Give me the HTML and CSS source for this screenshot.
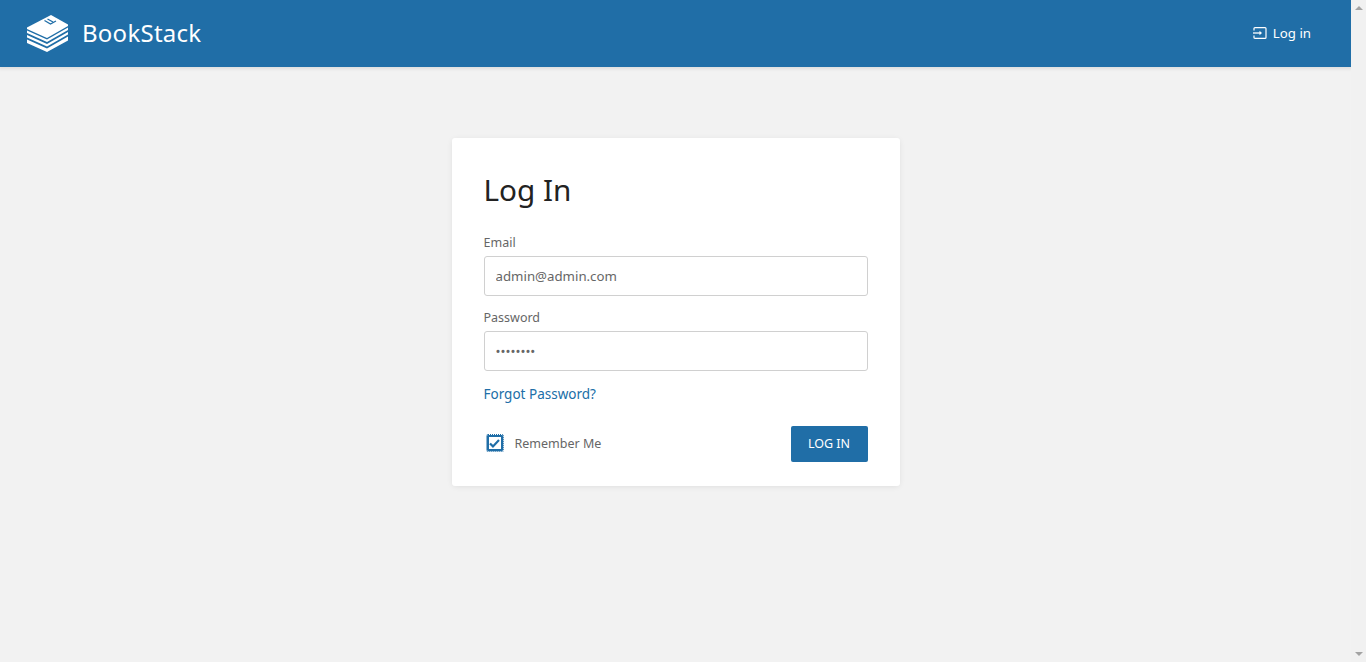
FILE: index.html
```html
<!DOCTYPE html>
<html>
<head>
	<meta charset="UTF-8">
	<title>Log In | BookStack</title>
	<link rel="stylesheet" href="styles.css">
</head>
<body>
	<div class="page">
		<header class="topbar">
			<a class="brand">
				<svg class="brand-logo" viewBox="0 0 42 37">
					<path fill="#fff" d="M25 0 42 9.500 42 11 21 23 1 14 1 12.500z"/>
					<path fill="none" stroke="#206ea7" stroke-width="1.300" d="M18.500 5.500 24.500 9 30 6M21.500 4 27 7"/>
					<path fill="#fff" d="M1 15.500 21 24.500 42 12.500v2.500L21 27 1 18zM1 20 21 29 42 17v2.500L21 31.500 1 22.500zM1 24.500 21 33.500 42 21.500v4L21 37 1 28z"/>
				</svg>
				<span class="brand-name">BookStack</span>
			</a>
			<a class="login-link">
				<svg class="login-icon" viewBox="0 0 14 12">
					<path fill="none" stroke="#fff" stroke-width="1.200" d="M1 3.500V1.600Q1 .6 2 .6h10q1 0 1 1v8.800q0 1-1 1H2q-1 0-1-1V8.500"/>
					<path fill="none" stroke="#fff" stroke-width="1.300" d="M0 6h7"/>
					<path fill="#fff" d="M6.500 3.800 9 6 6.500 8.200z"/>
				</svg>
				<span>Log in</span>
			</a>
		</header>

		<main class="content">
			<div class="card">
				<h1 class="card-title">Log In</h1>
				<form>
					<label class="field-label" for="email">Email</label>
					<input class="field-input" id="email" type="text" value="admin@admin.com">

					<label class="field-label second" for="password">Password</label>
					<input class="field-input" id="password" type="password" value="password">

					<a class="forgot-link">Forgot Password?</a>

					<div class="form-foot">
						<label class="remember">
							<span class="check-box">
								<svg viewBox="0 0 12 10"><path fill="none" stroke="#206ea7" stroke-width="2.400" d="M1 5 4.300 8.200 11 1.200"/></svg>
							</span>
							<span>Remember Me</span>
						</label>
						<button class="button" type="button">LOG IN</button>
					</div>
				</form>
			</div>
		</main>
	</div>

	<div class="scrollbar">
		<span class="arrow-up"></span>
		<span class="arrow-down"></span>
	</div>
</body>
</html>
```
FILE: styles.css
```css
* {
	box-sizing: border-box;
}

html, body {
	height: 100%;
	margin: 0;
	overflow: hidden;
}

body {
	display: flex;
	background-color: #f2f2f2;
	font-family: "Noto Sans", "Open Sans", sans-serif;
	color: #444;
}

.page {
	flex-grow: 1;
	min-width: 0;
}

.topbar {
	display: flex;
	align-items: center;
	justify-content: space-between;
	height: 67px;
	padding: 0 40px 0 26px;
	background-color: #206ea7;
	box-shadow: 0 1px 3px 1px rgba(76, 76, 76, 0.12);
	color: #fff;
}

.brand {
	display: flex;
	align-items: center;
}

.brand-logo {
	width: 42px;
	height: 37px;
}

.brand-name {
	margin-left: 14px;
	padding-bottom: 3px;
	font-size: 24px;
	letter-spacing: 0.25px;
}

.login-link {
	display: flex;
	align-items: center;
	padding-bottom: 1px;
	font-size: 13.250px;
}

.login-icon {
	width: 14px;
	height: 12px;
	margin-right: 6px;
}

.content {
	padding-top: 71px;
}

.card {
	width: 448px;
	height: 348px;
	margin: 0 auto;
	padding: 32px;
	background-color: #fff;
	border-radius: 3px;
	box-shadow: 0 1px 6px -1px rgba(0, 0, 0, 0.1);
}

.card-title {
	margin: 0 0 24px;
	height: 40px;
	font-size: 29.700px;
	line-height: 40px;
	font-weight: 400;
	color: #222;
}

.field-label {
	display: block;
	height: 16px;
	margin-bottom: 6px;
	font-size: 12.500px;
	line-height: 18px;
	color: #666;
}

.field-label.second {
	margin-top: 13px;
}

.field-input {
	display: block;
	width: 100%;
	height: 40px;
	padding: 0 11px 1px;
	border: 1px solid #d0d0d0;
	border-radius: 3px;
	font-family: inherit;
	font-size: 13.250px;
	color: #666;
	outline: none;
}

.forgot-link {
	display: block;
	margin-top: 13px;
	font-size: 13.500px;
	line-height: 20px;
	color: #206ea7;
}

.form-foot {
	display: flex;
	align-items: center;
	justify-content: space-between;
	margin-top: 22px;
}

.remember {
	display: flex;
	align-items: center;
	margin-bottom: 2px;
	font-size: 12.500px;
	color: #666;
}

.check-box {
	display: flex;
	align-items: center;
	justify-content: center;
	width: 16px;
	height: 16px;
	margin: 0 12px 0 3px;
	border: 2px solid #206ea7;
	border-radius: 1px;
	outline: 1px dotted #206ea7;
}

.check-box svg {
	width: 11px;
	height: 9px;
}

.button {
	width: 77px;
	height: 36px;
	padding: 0 0 2px;
	background-color: #206ea7;
	border: 0;
	border-radius: 2px;
	font-family: inherit;
	font-size: 12.500px;
	color: #fff;
}

.scrollbar {
	display: flex;
	flex-direction: column;
	align-items: center;
	justify-content: space-between;
	flex: 0 0 15px;
	padding: 6px 0;
	background-color: #f1f1f1;
}

.arrow-up, .arrow-down {
	width: 0;
	height: 0;
	border-left: 4px solid transparent;
	border-right: 4px solid transparent;
}

.arrow-up {
	border-bottom: 4px solid #a3a3a3;
}

.arrow-down {
	border-top: 4px solid #a3a3a3;
}
```
